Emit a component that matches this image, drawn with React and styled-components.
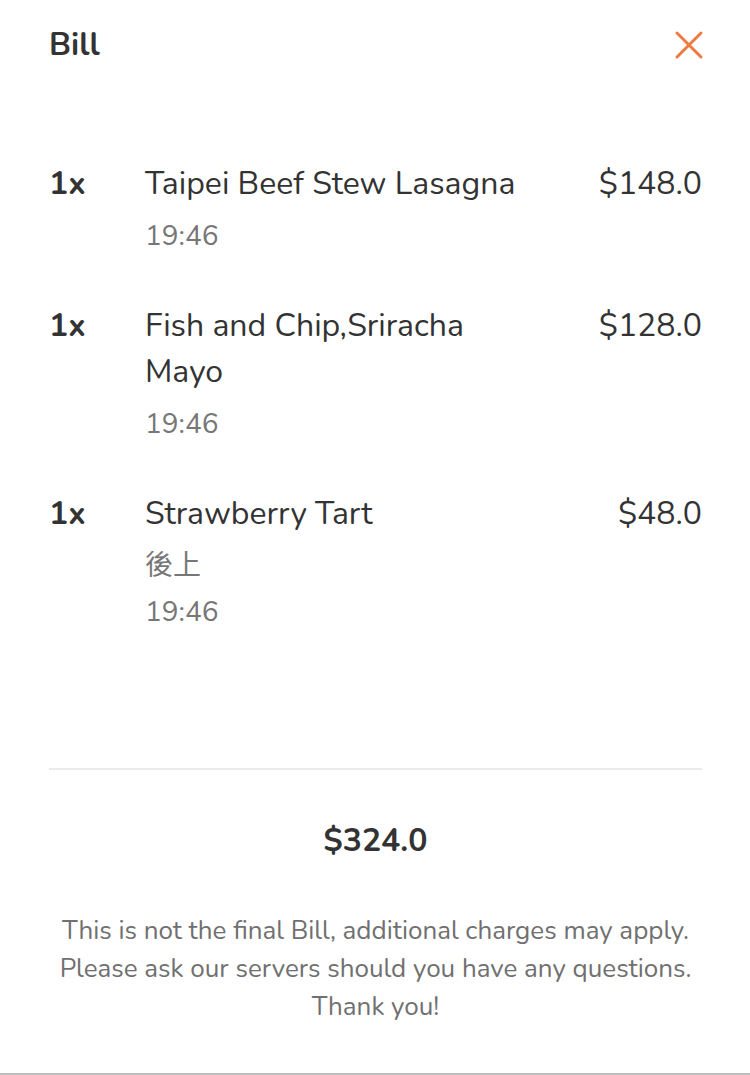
import React from "react";
import styled, { createGlobalStyle } from "styled-components";

const GlobalStyle = createGlobalStyle`
    * { box-sizing: border-box; }
    body {
        margin: 0;
        background: #fff;
        font-family: "Nunito", "Noto Sans", "Noto Sans CJK TC", sans-serif;
        color: #333;
    }
`;

const items = [
    { qty: 1, name: "Taipei Beef Stew Lasagna", price: 148, time: "19:46" },
    { qty: 1, name: "Fish and Chip,Sriracha Mayo", price: 128, time: "19:46" },
    { qty: 1, name: "Strawberry Tart", note: "後上", price: 48, time: "19:46" },
];

const BillView = () => {
    const total = items.reduce((sum, it) => sum + it.price * it.qty, 0);

    return (
        <Page>
            <Header>
                <Title>Bill</Title>
                <CloseBtn aria-label="close">
                    <svg width="30" height="30" viewBox="0 0 30 30">
                        <path d="M3 3 L27 27 M27 3 L3 27" stroke="#ef7a3f" strokeWidth="3" strokeLinecap="round" />
                    </svg>
                </CloseBtn>
            </Header>

            <ItemList>
                {items.map((it, i) => (
                    <Item key={i}>
                        <Qty>{it.qty}x</Qty>
                        <Info>
                            <Name>{it.name}</Name>
                            {it.note && <Sub>{it.note}</Sub>}
                            <Sub>{it.time}</Sub>
                        </Info>
                        <Price>${it.price.toFixed(1)}</Price>
                    </Item>
                ))}
            </ItemList>

            <Divider />

            <Total>${total.toFixed(1)}</Total>
            <Notice>
                This is not the final Bill, additional charges may apply.
                <br />
                Please ask our servers should you have any questions.
                <br />
                Thank you!
            </Notice>
        </Page>
    );
};

export default function App() {
    return (
        <>
            <GlobalStyle />
            <BillView />
        </>
    );
}

const Page = styled.div`
    width: 750px;
    min-height: 1075px;
    padding: 25px 48px 0 49px;
    border-bottom: 2px solid #bdbdbd;
`;

const Header = styled.div`
    display: flex;
    justify-content: space-between;
    align-items: center;
    height: 40px;
`;

const Title = styled.h1`
    margin: 0;
    font-size: 32px;
    font-weight: 700;
    line-height: 40px;
    color: #333;
`;

const CloseBtn = styled.button`
    display: flex;
    padding: 0;
    margin-right: -2px;
    border: none;
    background: none;
    cursor: pointer;
`;

const ItemList = styled.div`
    display: flex;
    flex-direction: column;
    gap: 44px;
    margin-top: 96px;
`;

const Item = styled.div`
    display: flex;
    align-items: flex-start;
`;

const Qty = styled.span`
    width: 96px;
    flex-shrink: 0;
    font-size: 32px;
    font-weight: 700;
    line-height: 46px;
`;

const Info = styled.div`
    flex: 1;
    max-width: 388px;
    display: flex;
    flex-direction: column;
    margin-right: auto;
`;

const Name = styled.span`
    font-size: 32px;
    line-height: 46px;
    color: #333;
`;

const Sub = styled.span`
    font-size: 28px;
    line-height: 46px;
    color: #777;
    margin-top: 6px;

    & + & {
        margin-top: 0;
    }
`;

const Price = styled.span`
    font-size: 32px;
    line-height: 46px;
    color: #333;
`;

const Divider = styled.hr`
    margin: 133px 0 0;
    border: none;
    border-top: 2px solid #ebebeb;
`;

const Total = styled.div`
    margin-top: 51px;
    text-align: center;
    font-size: 32px;
    font-weight: 700;
    line-height: 40px;
    color: #333;
`;

const Notice = styled.p`
    margin: 51px 0 0;
    text-align: center;
    font-size: 26px;
    line-height: 38px;
    color: #707070;
`;
